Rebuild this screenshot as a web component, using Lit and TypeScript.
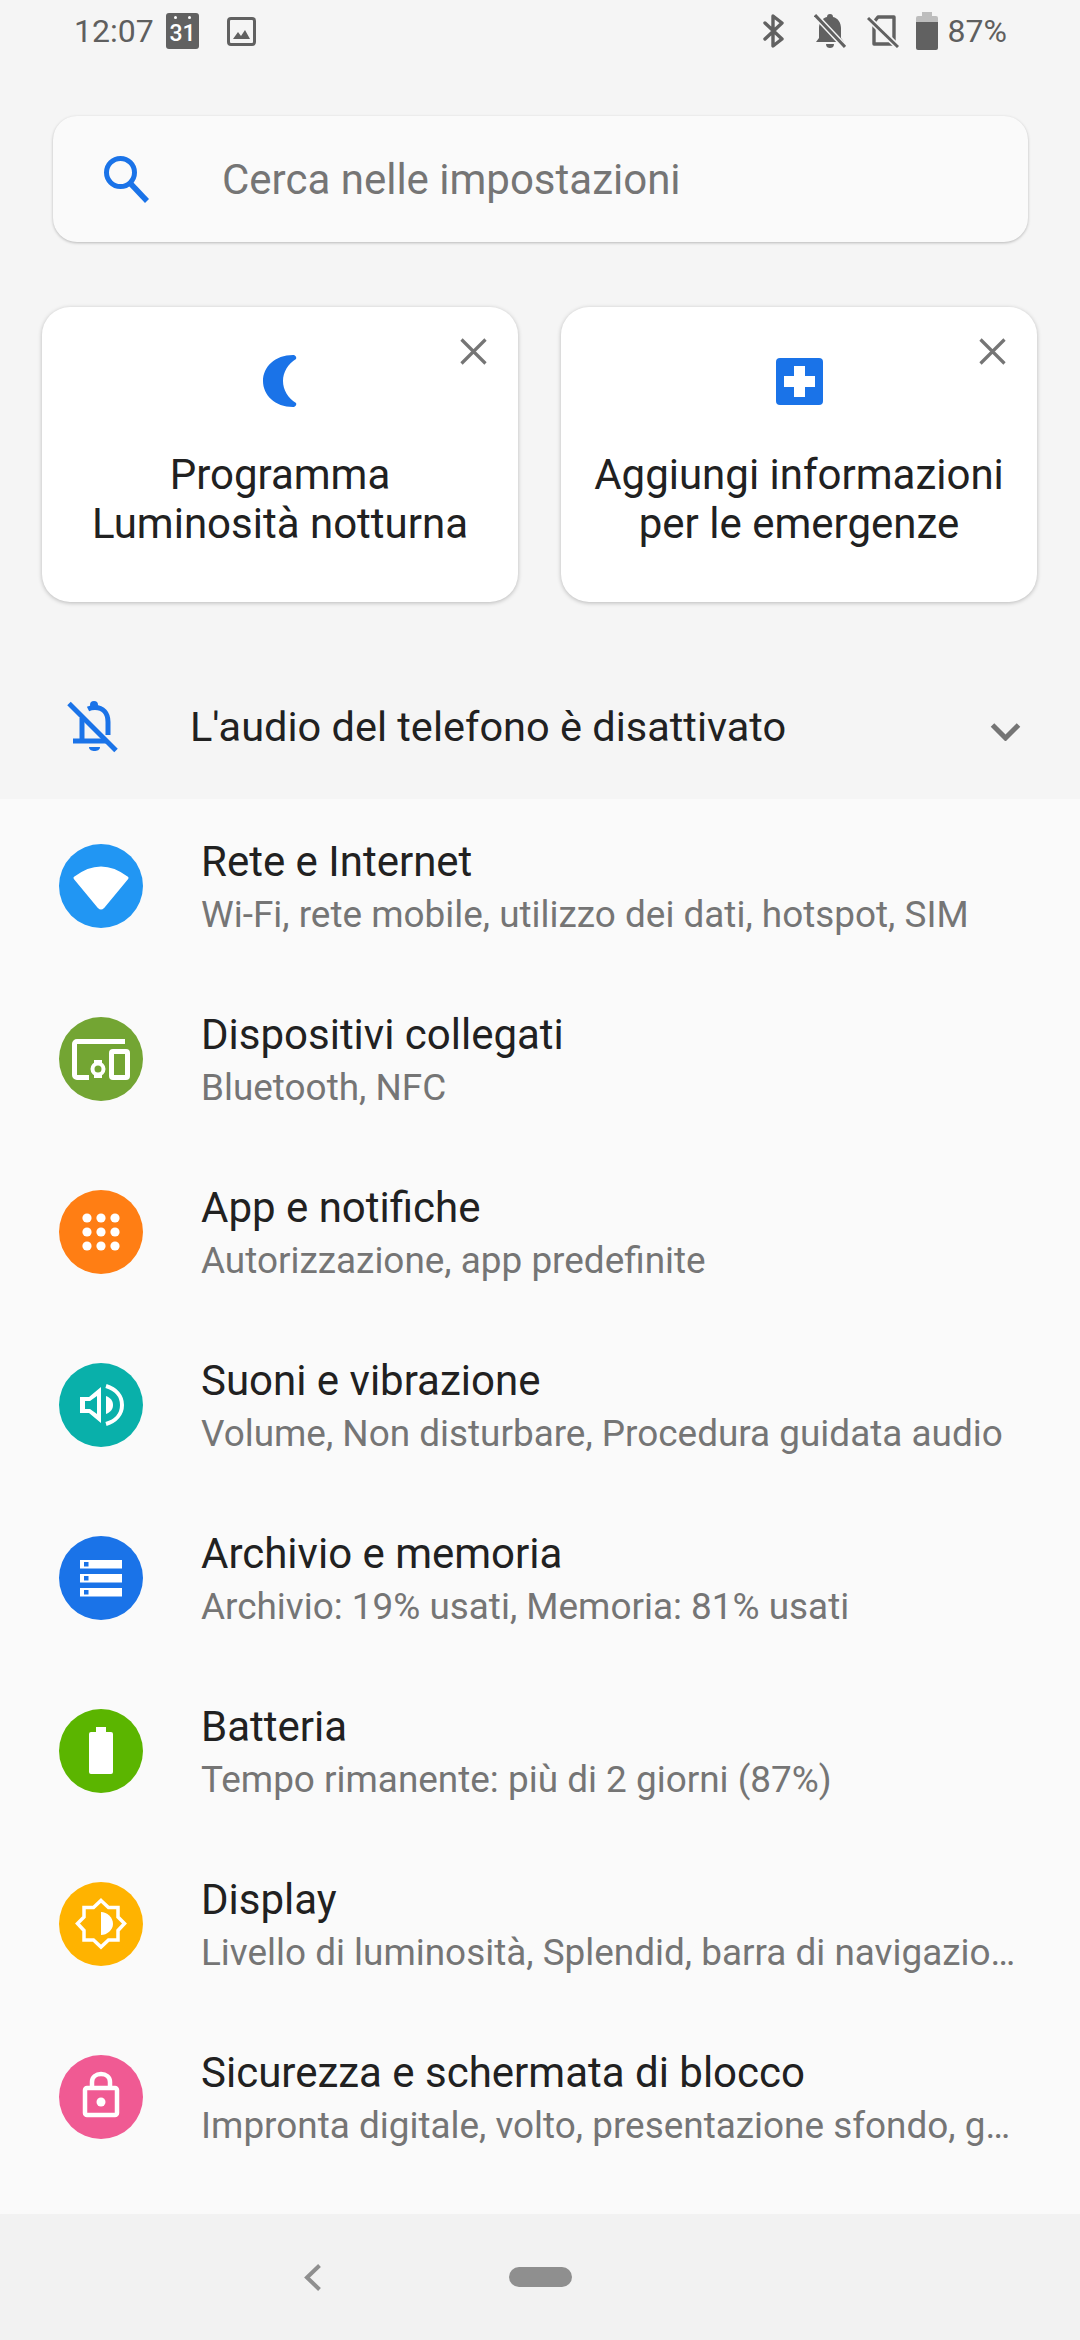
import { LitElement, html, css, svg } from "lit";
import { customElement } from "lit/decorators.js";

const rows = [
  { t: "Rete e Internet", s: "Wi-Fi, rete mobile, utilizzo dei dati, hotspot, SIM", c: "#2196f3", i: svg`<path d="M16 34 Q42 14 68 34 L44 63 Q42 65 40 63 Z" fill="#fff" stroke="#fff" stroke-width="3" stroke-linejoin="round"/>` },
  { t: "Dispositivi collegati", s: "Bluetooth, NFC", c: "#73a533", i: svg`<path d="M66 24.5 H18 a2.5 2.5 0 0 0 -2.5 2.5 V58 a2.5 2.5 0 0 0 2.5 2.5 H30" fill="none" stroke="#fff" stroke-width="5"/><rect x="52.5" y="34.5" width="16" height="26" rx="1.5" fill="none" stroke="#fff" stroke-width="5"/><circle cx="39" cy="52" r="5.5" fill="none" stroke="#fff" stroke-width="4"/><rect x="35" y="43" width="8" height="3" fill="#fff"/><rect x="35" y="58" width="8" height="3" fill="#fff"/>` },
  { t: "App e notifiche", s: "Autorizzazione, app predefinite", c: "#ff7e14", i: svg`${[28, 42, 56].map((y) => [28, 42, 56].map((x) => svg`<circle cx=${x} cy=${y} r="4.6" fill="#fff"/>`))}` },
  { t: "Suoni e vibrazione", s: "Volume, Non disturbare, Procedura guidata audio", c: "#09b0aa", i: svg`<path d="M21 34 H30 L42 24 V60 L30 50 H21 Z M26 38 V46 H31 L38 51 V33 L31 38 Z" fill="#fff" fill-rule="evenodd"/><path d="M47 33 C52 35 54 38 54 42 C54 46 52 49 47 51 Z" fill="#fff"/><path d="M47 23 C57 26 63 33 63 42 C63 51 57 58 47 61" fill="none" stroke="#fff" stroke-width="4"/>` },
  { t: "Archivio e memoria", s: "Archivio: 19% usati, Memoria: 81% usati", c: "#1a73e8", i: svg`${[24, 38, 52].map((y) => svg`<rect x="21" y=${y} width="42" height="8.5" fill="#fff"/><rect x="25" y=${y + 2} width="4.5" height="4.5" fill="#1a73e8"/>`)}` },
  { t: "Batteria", s: "Tempo rimanente: più di 2 giorni (87%)", c: "#5bb500", i: svg`<path d="M37 18 H47 V23 H52 a2 2 0 0 1 2 2 V63 a2 2 0 0 1 -2 2 H32 a2 2 0 0 1 -2 -2 V25 a2 2 0 0 1 2 -2 H37 Z" fill="#fff"/>` },
  { t: "Display", s: "Livello di luminosità, Splendid, barra di navigazione", c: "#ffb300", i: svg`<path d="M42 18.5 L49.5 25.5 H59 V35 L65.5 41.5 L59 48.5 V58 H49.5 L42 65 L34.5 58 H25 V48.5 L18.5 41.5 L25 35 V25.5 H34.5 Z" fill="none" stroke="#fff" stroke-width="3.5"/><path d="M42 30 C48 30 54 35 54 42 C54 48 48 53 42 53 Z" fill="#fff"/>` },
  { t: "Sicurezza e schermata di blocco", s: "Impronta digitale, volto, presentazione sfondo, gestione", c: "#f05a93", i: svg`<rect x="26" y="33" width="32" height="27" rx="2" fill="none" stroke="#fff" stroke-width="4.5"/><path d="M33 33 V27 C33 22 37 19 42 19 C47 19 51 22 51 27 V33" fill="none" stroke="#fff" stroke-width="4.5"/><circle cx="42" cy="47" r="4.5" fill="#fff"/>` },
];

const close = html`<svg class="close" width="27" height="27" viewBox="0 0 27 27"><path d="M1.5 1.5 L25.5 25.5 M25.5 1.5 L1.5 25.5" stroke="#757575" stroke-width="3.2" fill="none"/></svg>`;

@customElement("app-root")
export class AppRoot extends LitElement {
  static styles = css`
    :host { display: block; width: 1080px; height: 2340px; background: #f5f5f5; font-family: Roboto, sans-serif; overflow: hidden; }
    .status { height: 62px; display: flex; align-items: center; padding: 0 73px 0 74px; color: #5f5f5f; font-size: 32px; }
    .status svg { display: block; flex: none; }
    .time { width: 92px; }
    .cal { position: relative; width: 33px; height: 36px; background: #616161; border-radius: 3px; margin-right: 28px; color: #fff; font-size: 23px; font-weight: 500; text-align: center; line-height: 42px; }
    .cal i { position: absolute; top: 3px; width: 3px; height: 3px; border-radius: 50%; background: #fff; }
    .cal i.a { left: 8px; }
    .cal i.b { right: 8px; }
    .spacer { flex: 1; }
    .bell { margin-left: 29px; }
    .sim { margin-left: 21px; }
    .batt { margin-left: 17px; }
    .pct { margin-left: 10px; }
    .search { margin: 54px 52px 0 53px; height: 126px; background: #fafafa; border-radius: 24px; box-shadow: 0 1px 3px rgba(0,0,0,.25); display: flex; align-items: center; padding-left: 51px; box-sizing: border-box; }
    .search span { margin-left: 73px; font-size: 42px; color: #757575; }
    .cards { display: flex; gap: 43px; margin: 65px 43px 0 42px; }
    .card { position: relative; flex: 1; height: 295px; background: #fff; border-radius: 28px; box-shadow: 0 1px 4px rgba(0,0,0,.25); display: flex; flex-direction: column; align-items: center; box-sizing: border-box; padding-top: 47px; }
    .card .ic { height: 54px; display: flex; align-items: center; }
    .close { position: absolute; top: 31px; right: 31px; }
    .card p { margin: 42px 0 0; font-size: 42px; line-height: 49px; color: #212121; text-align: center; }
    .audio { height: 197px; display: flex; align-items: center; padding: 52px 59px 0 67px; box-sizing: border-box; }
    .audio span { margin-left: 72px; flex: 1; font-size: 41.5px; color: #212121; }
    .chev { margin-top: 9px; }
    .list { background: #fafafa; padding-bottom: 31px; }
    .row { height: 173px; display: flex; align-items: center; padding: 0 60px 0 59px; box-sizing: border-box; }
    .circle { width: 84px; height: 84px; flex: none; display: block; }
    .txt { margin-left: 58px; min-width: 0; flex: 1; padding-top: 4px; }
    .t { font-size: 42px; line-height: 53px; color: #212121; }
    .s { font-size: 36.9px; line-height: 53px; color: #757575; white-space: nowrap; overflow: hidden; text-overflow: ellipsis; }
    .nav { height: 126px; background: #f2f2f2; display: flex; align-items: center; padding-left: 304px; }
    .pill { width: 63px; height: 20px; border-radius: 10px; background: #8f8f8f; margin-left: 188px; }
  `;

  render() {
    return html`
      <div class="status">
        <span class="time">12:07</span>
        <div class="cal"><i class="a"></i><i class="b"></i>31</div>
        <svg width="29" height="29" viewBox="0 0 29 29"><rect x="1.5" y="1.5" width="26" height="26" rx="2.5" fill="none" stroke="#616161" stroke-width="3"/><path d="M6 22 L11 15 L14 19 L18 13 L23 22 Z" fill="#616161"/></svg>
        <div class="spacer"></div>
        <svg width="22" height="34" viewBox="0 0 22 34"><path d="M2 9 L19 25 L10 32 V2 L19 9 L2 25" fill="none" stroke="#616161" stroke-width="3.4" stroke-linecap="round" stroke-linejoin="round"/></svg>
        <svg class="bell" width="32" height="36" viewBox="0 0 32 36"><path d="M16 1 C18 1 19 2 19 4 C24 5 27 10 27 15 V25 L30 29 H2 L5 25 V15 C5 10 8 5 13 4 C13 2 14 1 16 1 Z M12 31 H20 C20 34 18 35 16 35 C14 35 12 34 12 31 Z" fill="#616161"/><path d="M1 2 L31 34" stroke="#f5f5f5" stroke-width="6"/><path d="M1 2 L31 34" stroke="#616161" stroke-width="3"/></svg>
        <svg class="sim" width="32" height="33" viewBox="0 0 32 33"><path d="M7 7 V29 H27 V2 H11 L7 7" fill="none" stroke="#616161" stroke-width="3.4" stroke-linejoin="round"/><path d="M1 3 L31 32" stroke="#f5f5f5" stroke-width="6"/><path d="M1 3 L31 32" stroke="#616161" stroke-width="3"/></svg>
        <svg class="batt" width="22" height="38" viewBox="0 0 22 38"><path d="M6 0 H16 V4 H20 a2 2 0 0 1 2 2 V10 H0 V6 a2 2 0 0 1 2 -2 H6 Z" fill="#bdbdbd"/><path d="M0 10 H22 V36 a2 2 0 0 1 -2 2 H2 a2 2 0 0 1 -2 -2 Z" fill="#616161"/></svg>
        <span class="pct">87%</span>
      </div>
      <div class="search">
        <svg width="45" height="47" viewBox="0 0 45 47"><circle cx="16.5" cy="16.5" r="14" fill="none" stroke="#1a73e8" stroke-width="5"/><path d="M26 27 L43 45" stroke="#1a73e8" stroke-width="5.5" fill="none"/></svg>
        <span>Cerca nelle impostazioni</span>
      </div>
      <div class="cards">
        <div class="card">
          <div class="ic"><svg width="34" height="54" viewBox="0 0 34 54"><path d="M30 1 C12 1 0 13 0 27 C0 41 12 53 30 53 C32 53 34 51 33 49 C25 44 20 36 20 27 C20 18 25 10 33 5 C34 3 32 1 30 1 Z" fill="#1a73e8"/></svg></div>
          ${close}
          <p>Programma<br>Luminosità notturna</p>
        </div>
        <div class="card">
          <div class="ic"><svg width="47" height="47" viewBox="0 0 47 47"><rect width="47" height="47" rx="4" fill="#1a73e8"/><path d="M18 8 H29 V18 H39 V29 H29 V39 H18 V29 H8 V18 H18 Z" fill="#fff"/></svg></div>
          ${close}
          <p>Aggiungi informazioni<br>per le emergenze</p>
        </div>
      </div>
      <div class="audio">
        <svg width="51" height="52" viewBox="0 0 51 52"><g fill="none" stroke="#1a73e8" stroke-width="5"><path d="M21 8 C23 7 25 6.500 28 6.500 C36 6.500 41 12 41 21 V34"/><path d="M15 17 V38"/><path d="M6 40 H39"/><path d="M2 2.500 L49 49.500"/></g><circle cx="27" cy="4" r="4" fill="#1a73e8"/><path d="M22 46 H33 C33 49 30 50 27.500 50 C25 50 22 49 22 46 Z" fill="#1a73e8"/></svg>
        <span>L'audio del telefono è disattivato</span>
        <svg class="chev" width="31" height="19" viewBox="0 0 31 19"><path d="M2.500 3 L15.500 16 L28.500 3" fill="none" stroke="#757575" stroke-width="5"/></svg>
      </div>
      <div class="list">
        ${rows.map((r) => html`
          <div class="row">
            <svg class="circle" viewBox="0 0 84 84"><circle cx="42" cy="42" r="42" style="fill:${r.c}"/>${r.i}</svg>
            <div class="txt"><div class="t">${r.t}</div><div class="s">${r.s}</div></div>
          </div>`)}
      </div>
      <div class="nav">
        <svg width="17" height="27" viewBox="0 0 17 27"><path d="M15.500 1.500 L3 13.500 L15.500 25.500" fill="none" stroke="#8f8f8f" stroke-width="4"/></svg>
        <div class="pill"></div>
      </div>
    `;
  }
}
